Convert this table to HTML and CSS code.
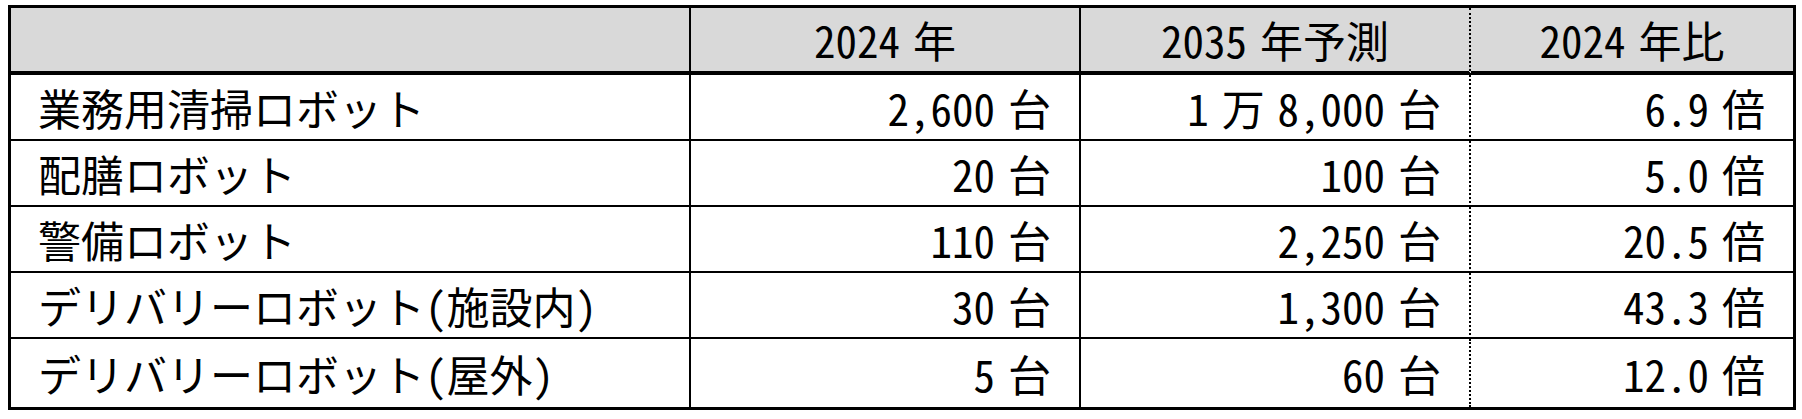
FILE: index.html
```html
<!DOCTYPE html>
<html lang="ja">
<head>
<meta charset="utf-8">
<link rel="stylesheet" href="styles.css">
</head>
<body>
<div class="sheet">
  <div class="grid">
    <div class="cell head first"></div>
    <div class="cell head center">2024 年</div>
    <div class="cell head center">2035 年予測</div>
    <div class="cell head center last">2024 年比</div>

    <div class="cell first">業務用清掃ロボット</div>
    <div class="cell num">2,600 台</div>
    <div class="cell num dot">1 万 8,000 台</div>
    <div class="cell num last">6.9 倍</div>

    <div class="cell first">配膳ロボット</div>
    <div class="cell num">20 台</div>
    <div class="cell num dot">100 台</div>
    <div class="cell num last">5.0 倍</div>

    <div class="cell first">警備ロボット</div>
    <div class="cell num">110 台</div>
    <div class="cell num dot">2,250 台</div>
    <div class="cell num last">20.5 倍</div>

    <div class="cell first">デリバリーロボット(施設内)</div>
    <div class="cell num">30 台</div>
    <div class="cell num dot">1,300 台</div>
    <div class="cell num last">43.3 倍</div>

    <div class="cell first bottom">デリバリーロボット(屋外)</div>
    <div class="cell num bottom">5 台</div>
    <div class="cell num dot bottom">60 台</div>
    <div class="cell num last bottom">12.0 倍</div>
  </div>
</div>
</body>
</html>
```

FILE: styles.css
```css
html, body {
  margin: 0;
  padding: 0;
  background: #ffffff;
}

.sheet {
  padding: 5px 0 0 8px;
}

.grid {
  display: grid;
  grid-template-columns: 680px 390px 390px 322px;
  grid-template-rows: 67px repeat(4, 66px) 68px;
  width: fit-content;
  border: 3px solid #000;
  font-family: "Noto Sans CJK JP", "Noto Sans", sans-serif;
  font-feature-settings: "hwid";
  font-size: 43px;
  word-spacing: -0.2em;
  color: #000;
}

.cell {
  box-sizing: border-box;
  display: flex;
  align-items: center;
  border-right: 2px solid #000;
  border-bottom: 2px solid #000;
  white-space: pre;
  line-height: 1;
}

.cell.head {
  background: #d9d9d9;
  border-bottom-width: 4px;
  justify-content: center;
}

.cell.first {
  padding-left: 27px;
}

.cell.num {
  justify-content: flex-end;
  padding-right: 28px;
}

.cell.dot {
  border-right: 2px dotted #000;
}

.grid > .cell:nth-child(3) {
  border-right: 2px dotted #000;
}

.cell.last {
  border-right: none;
}

.cell.bottom {
  border-bottom: none;
}
```
